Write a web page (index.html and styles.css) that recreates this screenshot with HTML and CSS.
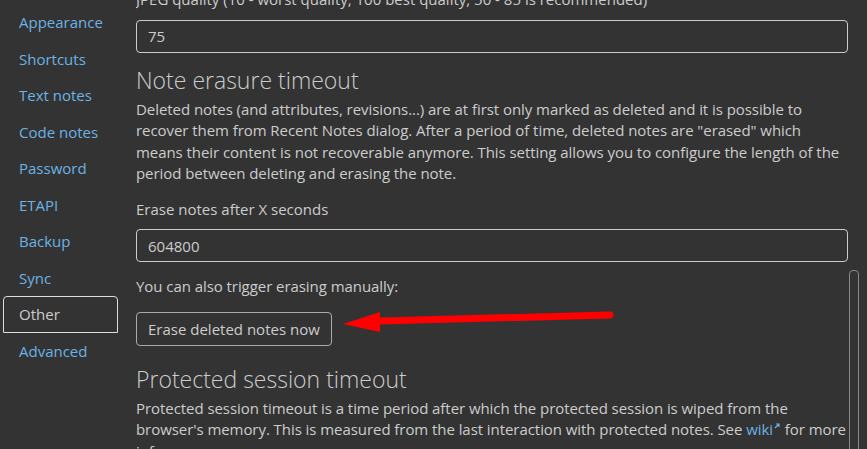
FILE: index.html
```html
<!DOCTYPE html>
<html lang="en">
<head>
  <meta charset="UTF-8">
  <title>Options</title>
  <link rel="stylesheet" href="styles.css">
</head>
<body>
  <div class="options">
    <nav class="nav">
      <a class="nav-link">Appearance</a>
      <a class="nav-link">Shortcuts</a>
      <a class="nav-link">Text notes</a>
      <a class="nav-link">Code notes</a>
      <a class="nav-link">Password</a>
      <a class="nav-link">ETAPI</a>
      <a class="nav-link">Backup</a>
      <a class="nav-link">Sync</a>
      <a class="nav-link active">Other</a>
      <a class="nav-link">Advanced</a>
    </nav>

    <div class="content">
      <div class="scroller">
        <label class="label">JPEG quality (10 - worst quality, 100 best quality, 50 - 85 is recommended)</label>
        <input class="input" type="text" value="75">

        <h4 class="title">Note erasure timeout</h4>
        <p class="text">Deleted notes (and attributes, revisions...) are at first only marked as deleted and it is possible to recover them from Recent Notes dialog. After a period of time, deleted notes are "erased" which means their content is not recoverable anymore. This setting allows you to configure the length of the period between deleting and erasing the note.</p>

        <label class="label">Erase notes after X seconds</label>
        <input class="input" type="text" value="604800">

        <p class="text">You can also trigger erasing manually:</p>
        <div class="action">
          <button class="btn">Erase deleted notes now</button>
          <svg class="arrow" width="280" height="30" viewBox="0 0 280 30">
            <path d="M36 16 L267 10" stroke="#ff0000" stroke-width="7" stroke-linecap="round"/>
            <polygon points="0,19 37,7 37,27" fill="#ff0000"/>
          </svg>
        </div>

        <h4 class="title">Protected session timeout</h4>
        <p class="text">Protected session timeout is a time period after which the protected session is wiped from the browser's memory. This is measured from the last interaction with protected notes. See <a class="link">wiki<svg class="ext" width="6" height="6" viewBox="0 0 6 6"><path d="M1 5 L5 1 M2 1 H5 V4" stroke="#6cb2e4" stroke-width="1.2" fill="none"/></svg></a> for more info.</p>
      </div>
    </div>

    <div class="scrollbar">
      <div class="thumb"></div>
    </div>
  </div>
</body>
</html>
```

FILE: styles.css
```css
html, body {
  margin: 0;
  height: 100%;
  overflow: hidden;
}
body {
  background-color: #333333;
  color: #cccccc;
  font-family: "Open Sans", sans-serif;
  font-size: 15px;
}
.options {
  display: flex;
  height: 100%;
}
.nav {
  display: flex;
  flex-direction: column;
  width: 115px;
  padding: 4px 0 0 3px;
  flex-shrink: 0;
}
.nav-link {
  display: block;
  padding: 7px 15px 6px;
  line-height: 21.5px;
  color: #6cb2e4;
  border: 1px solid transparent;
  border-radius: 4px 4px 0 0;
}
.nav-link.active {
  color: #cccccc;
  border-color: #dddddd;
}
.content {
  flex: 1;
  margin-left: 18px;
  overflow: hidden;
  position: relative;
}
.scroller {
  margin-top: -11px;
  width: 713px;
}
.label {
  display: block;
  line-height: 21.5px;
  margin-bottom: 9px;
}
.input {
  display: block;
  box-sizing: border-box;
  width: 712px;
  height: 33px;
  margin-bottom: 14px;
  padding: 0 11px;
  background: #333333;
  color: #cccccc;
  font-family: inherit;
  font-size: 15px;
  border: 1px solid #cccccc;
  border-radius: 4px;
  outline: none;
}
.title {
  margin: 13px 0 5px;
  font-size: 23px;
  font-weight: 300;
  line-height: 27px;
  color: #cccccc;
}
.text {
  margin: 0 0 14px;
  line-height: 21.5px;
  letter-spacing: -0.06px;
}
.action {
  display: flex;
  position: relative;
  margin-bottom: 20px;
}
.btn {
  height: 34px;
  padding: 0 11px;
  background: #333333;
  color: #cccccc;
  font-family: inherit;
  font-size: 15px;
  border: 1px solid #aaaaaa;
  border-radius: 4px;
}
.arrow {
  position: absolute;
  left: 207px;
  top: -7px;
}
.link {
  color: #6cb2e4;
}
.ext {
  margin: 0 1px 0 1px;
  vertical-align: 6px;
}
.scrollbar {
  width: 18px;
  flex-shrink: 0;
  padding-top: 270px;
}
.thumb {
  width: 8px;
  height: 200px;
  border: 1px solid #888888;
  border-radius: 4px;
}
```
